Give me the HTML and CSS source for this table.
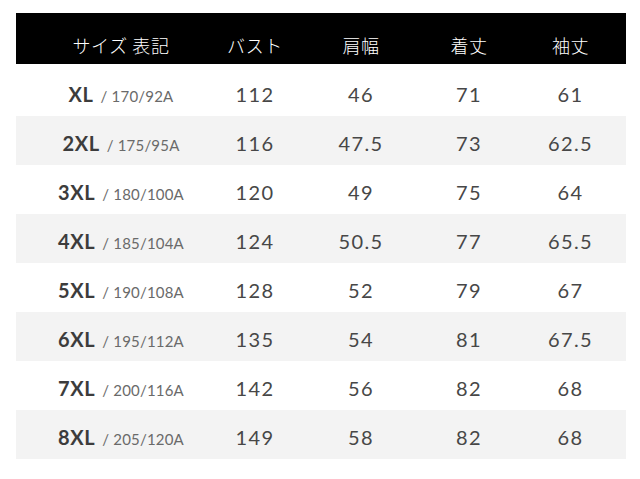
FILE: index.html
```html
<!DOCTYPE html>
<html lang="ja">
<head>
<meta charset="utf-8">
<link rel="stylesheet" href="styles.css">
</head>
<body>
<div class="table">
  <div class="row head">
    <div class="c">サイズ 表記</div><div class="c">バスト</div><div class="c">肩幅</div><div class="c">着丈</div><div class="c last">袖丈</div>
  </div>
  <div class="row first">
    <div class="c"><b>XL</b><span class="sub">/ 170/92A</span></div><div class="c">112</div><div class="c">46</div><div class="c">71</div><div class="c last">61</div>
  </div>
  <div class="row alt">
    <div class="c"><b>2XL</b><span class="sub">/ 175/95A</span></div><div class="c">116</div><div class="c">47.5</div><div class="c">73</div><div class="c last">62.5</div>
  </div>
  <div class="row">
    <div class="c"><b>3XL</b><span class="sub">/ 180/100A</span></div><div class="c">120</div><div class="c">49</div><div class="c">75</div><div class="c last">64</div>
  </div>
  <div class="row alt">
    <div class="c"><b>4XL</b><span class="sub">/ 185/104A</span></div><div class="c">124</div><div class="c">50.5</div><div class="c">77</div><div class="c last">65.5</div>
  </div>
  <div class="row">
    <div class="c"><b>5XL</b><span class="sub">/ 190/108A</span></div><div class="c">128</div><div class="c">52</div><div class="c">79</div><div class="c last">67</div>
  </div>
  <div class="row alt">
    <div class="c"><b>6XL</b><span class="sub">/ 195/112A</span></div><div class="c">135</div><div class="c">54</div><div class="c">81</div><div class="c last">67.5</div>
  </div>
  <div class="row">
    <div class="c"><b>7XL</b><span class="sub">/ 200/116A</span></div><div class="c">142</div><div class="c">56</div><div class="c">82</div><div class="c last">68</div>
  </div>
  <div class="row alt">
    <div class="c"><b>8XL</b><span class="sub">/ 205/120A</span></div><div class="c">149</div><div class="c">58</div><div class="c">82</div><div class="c last">68</div>
  </div>
</div>
</body>
</html>
```
FILE: styles.css
```css
html, body {
  margin: 0;
  padding: 0;
  background: #fff;
}
body {
  padding: 13px 14px 0 16px;
  font-family: "Lato", "Noto Sans CJK JP", sans-serif;
}
.table {
  display: flex;
  flex-direction: column;
}
.row {
  display: grid;
  grid-template-columns: 210px 58px 154px 62px 1fr;
  height: 49px;
  padding-top: 4px;
  box-sizing: border-box;
  align-items: center;
  color: #474747;
  font-size: 20px;
  letter-spacing: 1.4px;
}
.row.first {
  height: 52px;
  padding-top: 8px;
}
.row.alt {
  background: #f3f3f3;
}
.row.head {
  background: #000;
  color: #fff;
  height: 51px;
  font-family: "Noto Sans CJK JP", sans-serif;
  font-weight: 300;
  font-size: 18px;
  letter-spacing: 0.6px;
  padding-top: 12px;
}
.c {
  display: flex;
  justify-content: center;
  align-items: baseline;
  white-space: nowrap;
}
.c.last {
  padding-left: 15px;
}
.c b {
  font-weight: 700;
  color: #3c3c3c;
  font-size: 20px;
  letter-spacing: 0.6px;
}
.sub {
  font-size: 15px;
  color: #6a6a6a;
  margin-left: 7px;
  letter-spacing: 0.2px;
}
```
